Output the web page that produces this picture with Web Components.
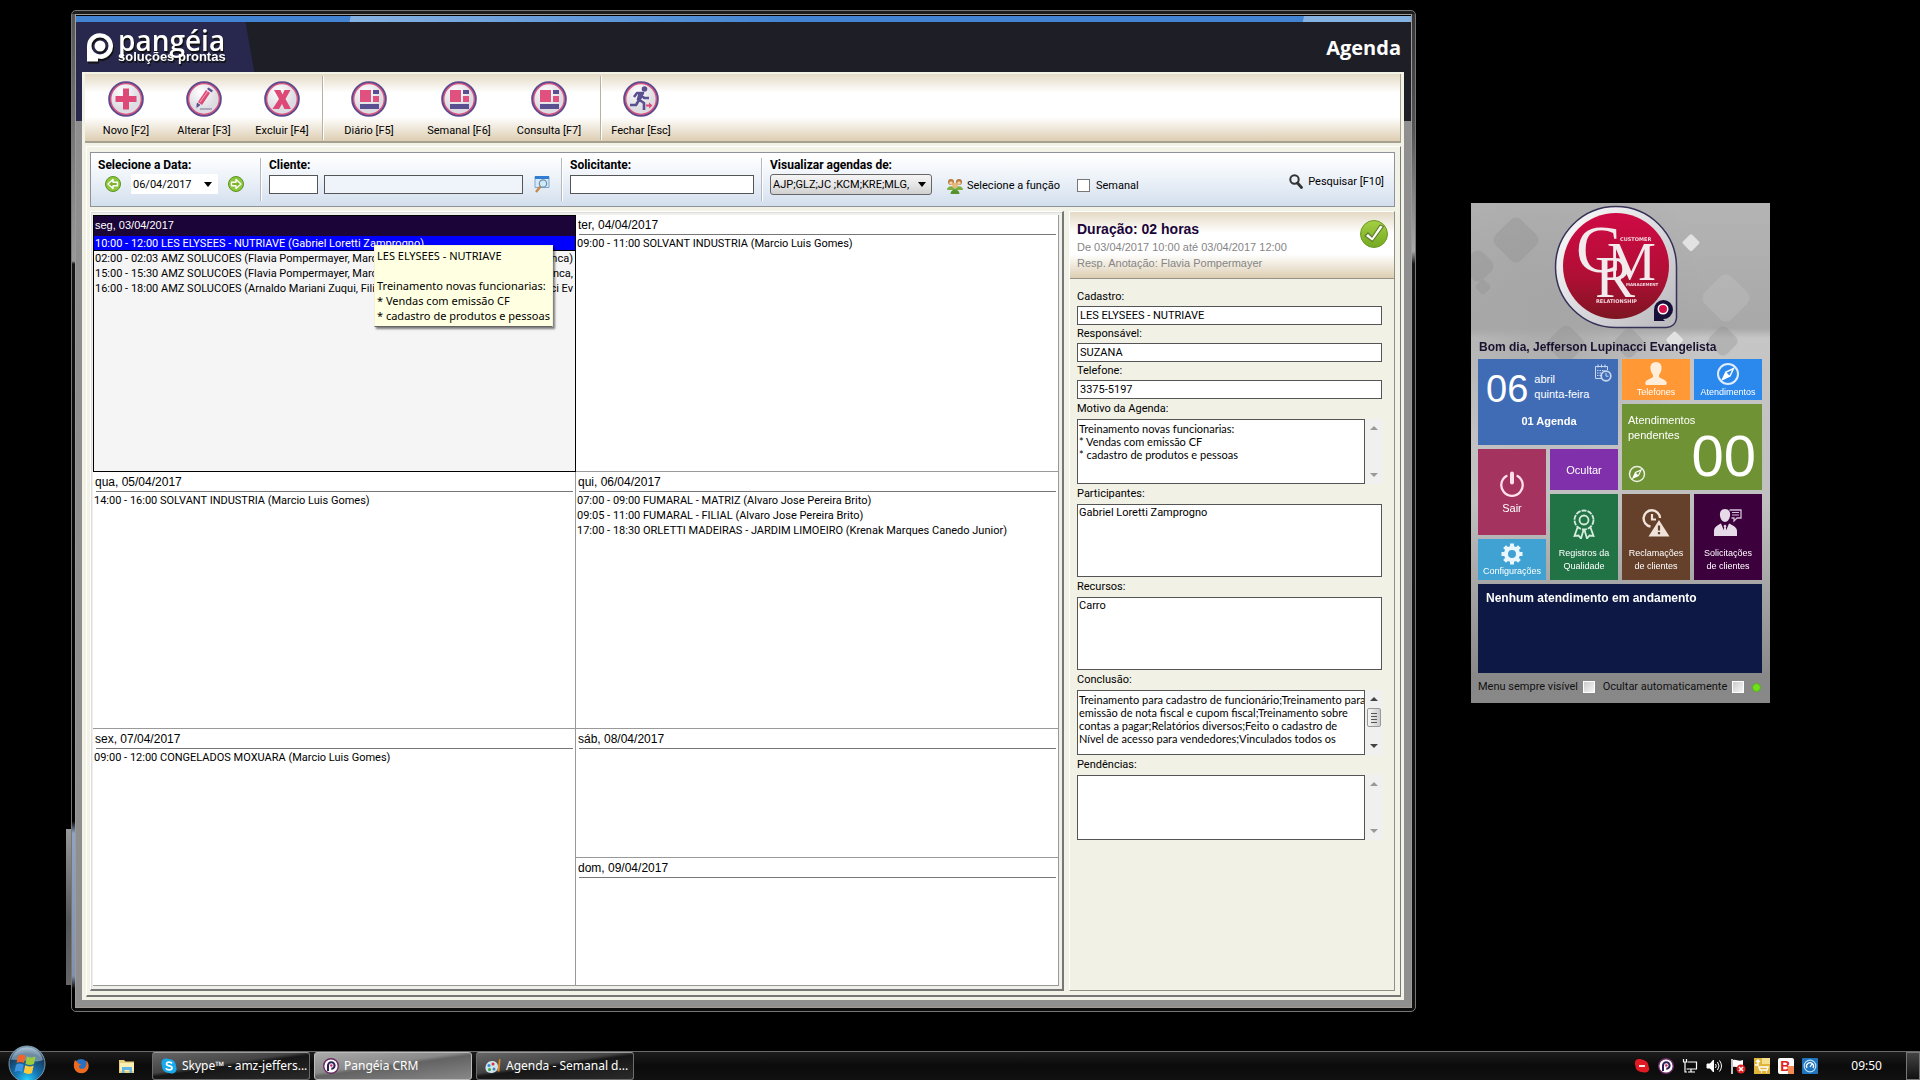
<!DOCTYPE html>
<html lang="pt-BR">
<head>
<meta charset="utf-8">
<title>Agenda</title>
<style>
html,body{margin:0;height:100%;background:#000}
body{font-family:Roboto,"Liberation Sans",sans-serif;font-size:11px;line-height:15px;color:#000;overflow:hidden}
</style>
</head>
<body>
<agenda-desktop></agenda-desktop>
<script>
const UI = '"Open Sans","Noto Sans",sans-serif';
const SANS = '"Liberation Sans",Arial,sans-serif';
const BASE = `*{box-sizing:border-box}
button,input,select,textarea{font:inherit;color:inherit;margin:0;border-radius:0}
button{background:none;border:0;padding:0;cursor:pointer}
svg{display:block;flex:none}`;

function define(name, css, html) {
  customElements.define(name, class extends HTMLElement {
    constructor() {
      super();
      const root = this.attachShadow({mode: 'open'});
      const body = typeof html === 'function' ? html(this) : html;
      root.innerHTML = `<style>${BASE}${css}</style>${body}`;
    }
  });
}

const badge = inner => `<svg width="38" height="38" viewBox="0 0 38 38">
<defs><radialGradient id="g" cx=".4" cy=".3"><stop offset="0" stop-color="#fff"/><stop offset="1" stop-color="#dcdce2"/></radialGradient></defs>
<circle cx="19" cy="19" r="16.6" fill="url(#g)" stroke="#5c4a8c" stroke-width="2.4"/><circle cx="19" cy="19" r="15.3" fill="none" stroke="#d9527f" stroke-width="1.3"/>${inner}</svg>`;
const plan = badge('<rect x="10" y="10" width="11" height="12" fill="#e0517f"/><rect x="23" y="10" width="6" height="4" fill="#5a4f90"/><rect x="23" y="16" width="6" height="6" fill="#e0517f"/><rect x="10" y="24" width="19" height="5" fill="#5a4f90"/>');
const compass = s => `<svg width="${s}" height="${s}" viewBox="0 0 24 24"><circle cx="12" cy="12" r="10" fill="none" stroke="#fff" stroke-width="2" opacity=".85"/><path d="M17.500 6.500L14 14l-7.500 3.500L10 10z" fill="none" stroke="#fff" stroke-width="1.500"/><path d="M10 10l4 4-7.500 3.500z" fill="#fff"/></svg>`;
const arrow = d => `<svg width="18" height="18" viewBox="0 0 18 18"><circle cx="9" cy="9" r="7.500" fill="#8cc63a" stroke="#5b9320"/><path d="${d}" fill="#7fb52c" stroke="#fff" stroke-width="1.400" stroke-linejoin="round"/></svg>`;
const pmark = (s, c) => `<svg width="${s - 3}" height="${s}" viewBox="1 0 27 30"><path fill="${c}" fill-rule="evenodd" d="M2 29.500V14A13 13 0 1 1 17 27L13 26.500v3zM15 5.500a8.500 8.500 0 1 0 0 17 8.500 8.500 0 0 0 0-17z"/><circle cx="15" cy="14" r="5.500" fill="${c}"/></svg>`;

const ICON = {
  novo: badge('<path d="M16 8.500h6v7.500h7.500v6H22v7.500h-6V22H8.500v-6H16z" fill="#dd4a77"/>'),
  alterar: badge('<path d="M13 22L21 10l4 3-8 12z" fill="#dd4a77"/><path d="M15 22l8-11" stroke="#f3b1c6"/><path d="M22 9l1.500-1.500 4.500 3L26.500 12.500zM11.500 25l.5-2.500 3.500 2.500-4 3z" fill="#5a4f90"/><path d="M15 29h12" stroke="#9b97b4" stroke-width="1.500"/>'),
  excluir: badge('<path d="M11 10h6.500l2 4.500 2-4.500h6l-5 9 5.500 10h-6.500l-2.500-5-3 5h-6.500l6.500-10z" fill="#dd4a77"/>'),
  diario: plan, semanal: plan, consulta: plan,
  fechar: badge('<circle cx="22.500" cy="9" r="2.800" fill="#5a4f90"/><path d="M12 17l3-4 6 0-3.500 7 4.500 3v7M18 13l4 5 5 0M17 20l-3 5H8" fill="none" stroke="#5a4f90" stroke-width="2.600" stroke-linejoin="round"/><path d="M16.500 13h5l-3 7h-4z" fill="#5a4f90"/><path d="M24 24.500h3V22.500l3.500 3-3.500 3V26.500h-3z" fill="#dd4a77"/>'),
  prev: arrow('M4 9l5-4.500v2.700h4.500v3.600H9v2.700z'),
  next: arrow('M14 9L9 4.500v2.700H4.500v3.600H9v2.700z'),
  find: '<svg width="16" height="18" viewBox="0 0 16 18"><path d="M1 1.500h14v11H1z" fill="#d9e8f6" stroke="#7ba7d4"/><path d="M1 1h14v3H1z" fill="#2f7cd0"/><circle cx="9" cy="8.500" r="3.700" fill="#cdeaf8" stroke="#6f8ea9" stroke-width="1.200"/><path d="M6.500 11.500L2 17" stroke="#c48a4a" stroke-width="2.400"/></svg>',
  group: '<svg width="16" height="16" viewBox="0 0 16 16"><circle cx="4" cy="4" r="3" fill="#b9773b"/><circle cx="12" cy="4" r="3" fill="#b9773b"/><circle cx="4" cy="5" r="1.800" fill="#f3cfa0"/><circle cx="12" cy="5" r="1.800" fill="#f3cfa0"/><path d="M0 12c0-5 8-5 8 0zM8 12c0-5 8-5 8 0z" fill="#7cb043"/><circle cx="8" cy="7.500" r="2.800" fill="#e8b77e"/><path d="M3.500 16c0-6 9-6 9 0z" fill="#57932c"/></svg>',
  lens: '<svg width="14" height="15" viewBox="0 0 14 15"><circle cx="5.500" cy="5.500" r="4.200" fill="none" stroke="#333" stroke-width="2"/><path d="M8.500 9l4 4.500" stroke="#333" stroke-width="2.800" stroke-linecap="round"/></svg>',
  check: '<svg width="30" height="30" viewBox="0 0 30 30"><defs><linearGradient id="k" x2="0" y2="1"><stop offset="0" stop-color="#a4cf44"/><stop offset="1" stop-color="#74a91f"/></linearGradient></defs><circle cx="15" cy="15" r="13.500" fill="url(#k)" stroke="#6d9a26"/><path d="M6 17l3-3 4 4 8-12 3.500 1.500L13.500 22.500z" fill="#fff" stroke="#607d2c" stroke-width="1.200" stroke-linejoin="round"/></svg>',
  calendar: '<svg width="18" height="18" viewBox="0 0 18 18" fill="none" stroke="#c9d8f0"><path d="M8 14.500H1.500v-12h12V6M4 .5v3M7.500.5v3M11 .5v3"/><path d="M3 6.500h8M3 9h4M3 11.500h4" stroke-dasharray="1.500 1"/><circle cx="12" cy="12" r="4.800" stroke-width="1.700"/><path d="M12 9v3.200h2.500"/></svg>',
  person: '<svg width="22" height="24" viewBox="0 0 22 24" fill="#ffeeda"><path d="M11 0c4 0 6 3 5.500 7-.3 3-1.500 4.500-2.500 6v2c1 1.500 6 2 7.500 5 .5 1.500 0 3-1 3H1.500c-1 0-1.500-1.500-1-3 1.500-3 6.500-3.500 7.500-5v-2C7 11.500 5.800 10 5.500 7 5 3 7 0 11 0z"/></svg>',
  compass: compass(24), compassSmall: compass(18),
  power: '<svg width="26" height="26" viewBox="0 0 26 26" fill="none" stroke="#ffe0ea" stroke-linecap="round"><path d="M7.500 5a10.700 10.700 0 1 0 11 0" stroke-width="2.300"/><path d="M13 2.500v9" stroke-width="4"/></svg>',
  gear: '<svg width="22" height="22" viewBox="-11 -11 22 22"><circle r="6" fill="none" stroke="#eaf7ff" stroke-width="4"/><path d="M0-10.500V-7M0 7v3.500M-10.500 0H-7M7 0h3.500M-7.400-7.400L-5-5M5 5l2.400 2.400M-7.400 7.400L-5 5M5-5l2.400-2.400" stroke="#eaf7ff" stroke-width="4"/></svg>',
  medal: '<svg width="24" height="30" viewBox="0 0 24 30" fill="none" stroke="#d5ecdd" stroke-width="1.800"><circle cx="12" cy="11" r="9.500" stroke-dasharray="5 1"/><circle cx="12" cy="11" r="4.500"/><path d="M5.500 18.500L2.500 27l4-.5 2.500 3 2.500-8.500M18.500 18.500l3 8.500-4-.5-2.500 3-2.500-8.500"/></svg>',
  warn: '<svg width="28" height="28" viewBox="0 0 28 28"><path d="M8.500 17.500A8.200 8.200 0 1 1 18 9" fill="none" stroke="#efe3da" stroke-width="2.400"/><path d="M10 5v5.500h4" fill="none" stroke="#efe3da" stroke-width="2.200"/><path d="M17 11l10.500 16.500H6.500z" fill="#efe3da"/><path d="M17 16.500v5M17 23v2.200" stroke="#65402a" stroke-width="2.200"/></svg>',
  client: '<svg width="28" height="28" viewBox="0 0 28 28"><path d="M11 0c4 0 5.500 3 5 7-.5 3-2.500 6-5 6s-4.500-3-5-6c-.5-4 1-7 5-7z" fill="#e6d9e8"/><path d="M0 27v-5c0-4 4-6 7-7.500L11 24l4-9.500c3 1.500 8 3.500 8 7.500v5z" fill="#e6d9e8"/><path d="M11 15.500l1.600 1.600-.8 1.200.8 4.700-1.600 2-1.600-2 .8-4.700-.8-1.200z" fill="#e6d9e8"/><path d="M15.500 1H27v8h-4l-3 3V9h-2.500" fill="none" stroke="#d3bfd8" stroke-width="1.300"/><path d="M18 3.500h7M18 6h7" stroke="#d3bfd8"/></svg>',
  orb: '<svg width="38" height="38" viewBox="0 0 38 38"><defs><radialGradient id="o" cx=".5" cy=".95" r=".9"><stop offset="0" stop-color="#27d2ff"/><stop offset=".35" stop-color="#1679b8"/><stop offset=".8" stop-color="#173a5c"/><stop offset="1" stop-color="#7f9fb8"/></radialGradient></defs><circle cx="19" cy="19" r="18" fill="url(#o)" stroke="#7c98aa"/><path d="M3 15a16.500 16.500 0 0 1 32 0c-9 4-22-1-32 0z" fill="#d8ecf6" opacity=".45"/><path d="M10 11c3-2 5-1.500 7.500 0L16 18c-3-1.500-5-1.500-7.500 0z" fill="#f0642a"/><path d="M19 11.500c3 1.500 5 1.500 8.500 0L26 19c-3 1.500-5.500 1.500-8.500-.3z" fill="#9ccc3c"/><path d="M8 19.800c3-1.800 5-1.500 7.700 0L14 27c-2.500-1.500-5-1.500-7.500 0z" fill="#3f94e0"/><path d="M17.200 20.300c3 1.500 5.300 1.500 8.500.2L24 28c-3 1.500-5.500 1-8.300-.5z" fill="#fbc93a"/></svg>',
  firefox: '<svg width="16" height="16" viewBox="0 0 16 16"><circle cx="8" cy="8" r="7" fill="#2b6fc0"/><path d="M2 2c-2 4-1.500 9 1.500 11.500S12 16 14.500 12s.5-8.500-1.500-9.500c1 3 .5 6-1.500 7.500s-5 1-5.500-1 1-2 2.500-2C7 5.500 5 6 4.500 4.500z" fill="#ef6a1b"/></svg>',
  folder: '<svg width="18" height="16" viewBox="0 0 18 16"><path d="M1 2h5l1.500 1.500H16V15H1z" fill="#e9cf7c"/><path d="M2 5h14v8H2z" fill="#fbefb6"/><path d="M4 15V9h10v6h-2.500v-3h-5v3z" fill="#62b5e4"/></svg>',
  skype: '<svg width="16" height="16" viewBox="0 0 16 16"><path d="M4.500.5c2 0 2.500.5 3.500.5 4 0 7 3 7 7 0 .8.800 1.500.5 3.500-.5 3-3 4-4.500 4S9 15 8 15c-4 0-7-3-7-7 0-1-.7-2-.5-3.500C1 2 2.500.5 4.500.5z" fill="#16a9ec"/><path d="M11 5.500C10 3.500 5.500 3.500 5.500 6c0 2.500 5.500 1.200 5.500 3.800 0 2.700-5 2.700-6 .4" fill="none" stroke="#fff" stroke-width="1.700"/></svg>',
  pangeia: '<svg width="16" height="16" viewBox="0 0 16 16"><circle cx="8" cy="8" r="7.300" fill="#fff" stroke="#6b2a63" stroke-width="1.400"/><path d="M5 13V7.500a3.300 3.300 0 1 1 3.300 3.300" fill="none" stroke="#2b1d55" stroke-width="2"/><circle cx="8.300" cy="7.500" r="1.300" fill="#d32b60"/></svg>',
  paint: '<svg width="16" height="16" viewBox="0 0 16 16"><path d="M7 3c4 0 6 2.500 6 6s-3 6-7 6-6-3-5.500-6S3 3 7 3z" fill="#cfe3ee"/><circle cx="4" cy="7.500" r="1.500" fill="#2f8fd0"/><circle cx="8" cy="6" r="1.500" fill="#d33"/><circle cx="4.500" cy="11.500" r="1.500" fill="#3a3"/><circle cx="9" cy="11" r="1.500" fill="#4a7fb0"/><path d="M14 1l1.500.5-1 12h-2z" fill="#e28a25"/></svg>',
  tSkype: '<svg width="16" height="16" viewBox="0 0 16 16"><path d="M4.500 1C9 1 14.500 3 14.500 8c0 1 1 1.500.7 3.500-.5 2-2 3-4 3S1 14 1.500 8C.3 5 1 1 4.500 1z" fill="#e01b24"/><path d="M5 8h6" stroke="#fff" stroke-width="1.800"/></svg>',
  tNet: '<svg width="16" height="16" viewBox="0 0 16 16" fill="none" stroke="#fff" stroke-width="1.200"><path d="M5.500 4h9v7h-10M9 11v2.500M6 14h7M3 6v8h2M1.500 1v3h3V1M3 4v3"/></svg>',
  tVol: '<svg width="16" height="16" viewBox="0 0 16 16" fill="none" stroke="#fff"><path d="M1 6h3l3.500-4v12L4 10H1z" fill="#fff"/><path d="M9.500 6q1.500 2 0 4M11.500 4q3 4 0 8M13.500 2.500q4 5.500 0 11"/></svg>',
  tFlag: '<svg width="16" height="16" viewBox="0 0 16 16"><path d="M2 1v15" stroke="#fff" stroke-width="1.500"/><path d="M3 2c4-1 5 2 10 0v7c-5 2-6-1-10 0z" fill="#fff"/><circle cx="11" cy="11" r="4.500" fill="#d22"/><path d="M9 9l4 4M13 9l-4 4" stroke="#fff" stroke-width="1.500"/></svg>',
  tCart: '<svg width="16" height="16" viewBox="0 0 16 16"><path d="M0 0h16v16H0z" fill="#e0b63a"/><path d="M8 0h8v6H8z" fill="#f5e08e"/><path d="M1 7h3V3M2 4l2-2 2 2M5 9h9l-1 3H6zM7 14h1M12 14h1" fill="none" stroke="#fff" stroke-width="1.500"/></svg>',
  tBlue: '<svg width="16" height="16" viewBox="0 0 16 16"><rect width="16" height="16" rx="1" fill="#1f74bd"/><circle cx="8" cy="8" r="5.800" fill="none" stroke="#bfe0f7" stroke-width="1.200"/><path d="M5 10a3.500 3.500 0 1 1 6 0M8 9l2-3" fill="none" stroke="#fff" stroke-width="1.300"/></svg>'
};

define('app-icon', ':host{display:block;flex:none}', el => ICON[el.getAttribute('name')] || '');

/* ---------- toolbar ---------- */
define('tool-button', `
:host{display:block;width:var(--w,78px)}
button{width:100%;display:flex;flex-direction:column;align-items:center;gap:5px;white-space:nowrap}`,
el => `<button type="button"><app-icon name="${el.getAttribute('icon')}"></app-icon><slot></slot></button>`);

define('tool-bar', `
:host{display:flex;height:69px;padding:6px 2px 1px;border:1px solid #a5a090;border-width:0 1px 2px 0;
background:linear-gradient(#e4dac5,#fff 28%,#fff 64%,#ddceb2)}
i{width:2px;margin:-4px 0 0 1px;background:linear-gradient(90deg,#b5b1a5 50%,#fff 50%)}
.wide{--w:90px;display:flex;padding-right:5px}`,
`<tool-button icon="novo">Novo [F2]</tool-button><tool-button icon="alterar">Alterar [F3]</tool-button><tool-button icon="excluir">Excluir [F4]</tool-button><i></i>
<div class="wide"><tool-button icon="diario">Diário [F5]</tool-button><tool-button icon="semanal">Semanal [F6]</tool-button><tool-button icon="consulta">Consulta [F7]</tool-button></div><i></i>
<tool-button icon="fechar">Fechar [Esc]</tool-button>`);

/* ---------- filters ---------- */
define('filter-bar', `
:host{display:flex;height:55px;padding:5px 10px 5px 7px;border:1px solid #8f9298;background:linear-gradient(#fff 5%,#eef3f9 45%,#d3dfee)}
section{display:flex;flex-direction:column;gap:1px}
section>label{font-weight:bold;font-size:12px;line-height:15px}
.row{display:flex;align-items:center;height:20px}
i{width:2px;margin-right:7px;background:linear-gradient(90deg,#b4b8bd 50%,#fff 50%)}
input[type=text]{height:19px;border:1px solid #555;background:#fff;padding:0 3px}
select{appearance:none;outline:0}
.s{position:relative;display:flex}
.s::after{content:"";position:absolute;right:6px;top:8px;border:4px solid transparent;border-top:5px solid #000;border-bottom:0}
.date select{width:87px;height:20px;border:0;background:#fff;padding:0 2px}
.who select{width:162px;height:21px;border:1px solid #666;border-radius:3px;background:linear-gradient(#f5f5f5,#e6e6e6 50%,#d0d0d0);padding:0 14px 0 2px}
.a{width:162px}.b{width:292px}.c{width:191px}
.date{padding-left:6px;gap:9px}
.opts{display:flex;align-items:center;padding-top:12px;gap:4px;margin-left:15px}
.opts button{display:flex;align-items:center;gap:4px}
.opts label{display:flex;align-items:center;gap:6px}
input[type=checkbox]{appearance:none;width:13px;height:13px;border:1px solid #777;background:#fff;margin-left:13px}
.code{width:49px;margin-right:6px}.name{width:199px;margin-right:11px}
.name[type=text]{background:#eff4fa}.req{width:184px}
.find{margin-left:auto;display:flex;align-items:center;gap:5px;align-self:flex-start;margin-top:14px;height:18px}`,
`<section class="a"><label for="dt">Selecione a Data:</label><div class="row date"><button type="button" aria-label="Anterior"><app-icon name="prev"></app-icon></button><span class="s"><select id="dt"><option>06/04/2017</option></select></span><button type="button" aria-label="Próximo"><app-icon name="next"></app-icon></button></div></section><i></i>
<section class="b"><label for="cli">Cliente:</label><div class="row"><input id="cli" type="text" class="code"><input type="text" aria-label="Nome do cliente" readonly class="name"><button type="button" aria-label="Localizar"><app-icon name="find"></app-icon></button></div></section><i></i>
<section class="c"><label for="sol">Solicitante:</label><div class="row"><input id="sol" type="text" class="req"></div></section><i></i>
<section><label for="who">Visualizar agendas de:</label><div class="row who"><span class="s"><select id="who"><option>AJP;GLZ;JC ;KCM;KRE;MLG,</option></select></span></div></section>
<div class="opts"><button type="button"><app-icon name="group"></app-icon>Selecione a função</button><label><input type="checkbox">Semanal</label></div>
<button type="button" class="find"><app-icon name="lens"></app-icon>Pesquisar [F10]</button>`);

/* ---------- calendar ---------- */
define('day-cell', `
:host{display:flex;flex-direction:column;min-height:0;min-width:0;overflow:hidden;border-right:1px solid #999;border-bottom:1px solid #999;background:#fff}
h3{margin:0 2px 1px 3px;font:12px/20px ${SANS};height:20px;border-bottom:1px solid #777;text-indent:-1px;flex:none}
:host([selected]){background:#f5f5f5;border:1px solid #000}
:host([selected]) h3{margin:0;padding-left:2px;background:#1a0438;color:#fff;border:0;font-size:11px;line-height:19px}
::slotted(div){padding:0 2px 0 1px;height:15px;line-height:15px;white-space:nowrap;overflow:hidden;display:flex;justify-content:space-between;flex:none}
::slotted(.on){background:#00f;color:#fff;border-bottom:1px solid #000}`,
el => `<h3>${el.getAttribute('day')}</h3><slot></slot>`);

define('event-tip', `
:host{position:absolute;z-index:2;left:283px;top:33px;padding:2px 2px 3px;background:#ffffe1;border:1px solid #f4f4d4;border-bottom-color:#666;
box-shadow:2px 2px 2px rgba(0,0,0,.5);font:11px/15px "Noto Sans",sans-serif;white-space:pre}`, '<slot></slot>');

define('week-calendar', `
:host{position:relative;display:grid;grid-template-columns:1fr 1fr;min-width:0;min-height:0;flex:1;
border:1px solid;border-color:#fff #777 #777 #fff;border-right-width:2px;border-bottom-width:2px;padding:3px 3px 3px 2px;background:#f0f0ea;box-shadow:inset 1px 1px #ddd}
.col{display:grid;grid-template-rows:repeat(6,1fr);min-height:0;min-width:0}
.col>*{grid-row:span 2}.col>.half{grid-row:span 1}`,
`<div class="col">
<day-cell selected day="seg, 03/04/2017"><div class="on">10:00 - 12:00 LES ELYSEES - NUTRIAVE (Gabriel Loretti Zamprogno)</div><div><span>02:00 - 02:03 AMZ SOLUCOES (Flavia Pompermayer, Marc</span><span>nca)</span></div><div><span>15:00 - 15:30 AMZ SOLUCOES (Flavia Pompermayer, Marc</span><span>nca,</span></div><div><span>16:00 - 18:00 AMZ SOLUCOES (Arnaldo Mariani Zuqui, Filip</span><span>ci Ev</span></div></day-cell>
<day-cell day="qua, 05/04/2017"><div>14:00 - 16:00 SOLVANT INDUSTRIA (Marcio Luis Gomes)</div></day-cell>
<day-cell day="sex, 07/04/2017"><div>09:00 - 12:00 CONGELADOS MOXUARA (Marcio Luis Gomes)</div></day-cell></div>
<div class="col">
<day-cell day="ter, 04/04/2017"><div>09:00 - 11:00 SOLVANT INDUSTRIA (Marcio Luis Gomes)</div></day-cell>
<day-cell day="qui, 06/04/2017"><div>07:00 - 09:00 FUMARAL - MATRIZ (Alvaro Jose Pereira Brito)</div><div>09:05 - 11:00 FUMARAL - FILIAL (Alvaro Jose Pereira Brito)</div><div>17:00 - 18:30 ORLETTI MADEIRAS - JARDIM LIMOEIRO (Krenak Marques Canedo Junior)</div></day-cell>
<day-cell class="half" day="sáb, 08/04/2017"></day-cell>
<day-cell class="half" day="dom, 09/04/2017"></day-cell></div>
<event-tip>LES ELYSEES - NUTRIAVE

Treinamento novas funcionarias:
* Vendas com emissão CF
* cadastro de produtos e pessoas</event-tip>`);

/* ---------- details ---------- */
define('scroll-rail', `
:host{display:flex;flex-direction:column;justify-content:space-between;align-items:center;width:16px;background:#f0f0f0;padding:7px 0;position:relative}
b{border:4px solid transparent;border-width:0 4px 4px;border-bottom-color:#999}
b:last-child{border-width:4px 4px 0;border-top-color:#999}
:host([thumb]) b{border-bottom-color:#444;border-top-color:#444}
u{display:none}
:host([thumb]) u{display:block;position:absolute;left:1px;top:18px;width:14px;height:19px;border:1px solid #999;border-radius:2px;background:repeating-linear-gradient(#555 0 1px,transparent 1px 3px) center/6px 10px no-repeat,linear-gradient(90deg,#f6f6f6,#ccc)}`,
'<b></b><u></u><b></b>');

define('field-box', `
:host{display:flex;flex-direction:column}
label{height:18px;line-height:18px}
:host([kind]) label{height:20px;line-height:20px}
input{height:19px;width:100%;border:1px solid #555;background:#fff;padding:0 2px 1px}
.box{display:flex;gap:1px}
textarea{display:block;flex:1;min-width:0;height:65px;border:1px solid #555;background:#fff;resize:none;overflow:hidden;padding:2px 1px;line-height:13px;outline:0;white-space:pre}
:host([kind=memo]) textarea{font-family:Lato,Roboto,sans-serif}
:host([kind=list]) textarea{height:73px;padding-top:1px}`,
el => {
  const k = el.getAttribute('kind'), v = el.getAttribute('value') || '';
  return `<label for="f">${el.getAttribute('label')}</label>` + (!k ? `<input id="f" value="${v}">` :
    `<div class="box"><textarea id="f" readonly>${v}</textarea>${k === 'memo' ? `<scroll-rail${el.hasAttribute('thumb') ? ' thumb' : ''}></scroll-rail>` : ''}</div>`);
});

define('detail-panel', `
:host{display:block;width:326px;flex:none;border:1px solid;border-color:#fff #8f8f86 #8f8f86 #fff;background:#f1f1e6}
header{display:flex;justify-content:space-between;height:67px;padding:8px 5px 0 7px;color:#858585;font-family:${SANS};
border-bottom:1px solid #96938a;background:linear-gradient(#e4dac5,#fff 32%,#fff 64%,#ddceb2)}
h2{margin:0;font-size:14px;line-height:19px;color:#1a0438}
p{margin:0;line-height:16px}
app-icon{margin-top:-1px}
.f{padding:9px 12px 0 7px}`,
`<header><div><h2>Duração: 02 horas</h2><p>De 03/04/2017 10:00 até 03/04/2017 12:00</p><p>Resp. Anotação: Flavia Pompermayer</p></div><app-icon name="check"></app-icon></header>
<div class="f"><field-box label="Cadastro:" value="LES ELYSEES - NUTRIAVE"></field-box>
<field-box label="Responsável:" value="SUZANA"></field-box>
<field-box label="Telefone:" value="3375-5197"></field-box>
<field-box kind="memo" label="Motivo da Agenda:" value="Treinamento novas funcionarias:&#10;* Vendas com emissão CF&#10;* cadastro de produtos e pessoas"></field-box>
<field-box kind="list" label="Participantes:" value="Gabriel Loretti Zamprogno"></field-box>
<field-box kind="list" label="Recursos:" value="Carro"></field-box>
<field-box kind="memo" thumb label="Conclusão:" value="Treinamento para cadastro de funcionário;Treinamento para&#10;emissão de nota fiscal e cupom fiscal;Treinamento sobre&#10;contas a pagar;Relatórios diversos;Feito o cadastro de&#10;Nível de acesso para vendedores;Vinculados todos os"></field-box>
<field-box kind="memo" label="Pendências:"></field-box></div>`);

/* ---------- main window ---------- */
define('agenda-window', `
:host{display:flex;flex:1;min-width:0;position:relative}
.edge{position:absolute;left:-5px;top:819px;width:5px;height:156px;background:linear-gradient(#999,#555 60%,#666)}
.frame{flex:1;min-width:0;display:flex;border:1px solid #777;border-radius:5px;padding:3px;
background:linear-gradient(#1c1c1c,#1c1c1c) 0 0/100% 3px no-repeat,
linear-gradient(#555,#999 250px,#151515 253px,#000 810px,#8ea3c8 822px,#7f92b4 965px,#000 978px) 0 0/3px 100% no-repeat,
linear-gradient(#333,#555 120px,#aaa 240px,#151515 253px,#111) 100% 0/3px 100% no-repeat,#0c0c0c}
.in{flex:1;min-width:0;display:flex;flex-direction:column;border:1px solid #a09c94;padding-top:1px;background:#000}
.stripe{height:6px;background:linear-gradient(100deg,#4384d2 270px,#86b2e2 271px,#4384d2 700px,#4384d2 calc(100% - 107px),#86b2e2 calc(100% - 106px))}
.head{height:50px;display:flex;justify-content:space-between;align-items:center;padding:0 10px;color:#fff;
background:linear-gradient(80deg,#28284e 175px,#1d1e26 176px)}
.logo{display:flex;gap:5px;align-items:center;filter:drop-shadow(1px 2px 0 #111)}
.name{font:600 28px/20px ${UI}}
.sub{font:bold 13px/14px ${SANS};white-space:nowrap}
h1{margin:2px 0 0;font:bold 20px/28px ${UI}}
.body{flex:1;min-height:0;display:flex;padding:0 7px 7px 6px;
background:linear-gradient(90deg,#28284e 50%,#1d1e26 50%) 0 0/100% 49px no-repeat,#8f8f8f}
.client{flex:1;min-width:0;display:flex;flex-direction:column;gap:3px;background:#f2f2e7;padding:2px 3px 3px}
.panel{flex:1;min-height:0;display:flex;flex-direction:column;gap:4px;margin:0 0 0 1px;padding:5px 5px 4px 3px;border:1px solid;border-color:#fff #777 #777 #fff;border-bottom-width:2px}
.split{flex:1;min-height:0;display:flex;gap:5px}`,
`<div class="edge"></div><div class="frame"><div class="in"><div class="stripe"></div>
<div class="head"><div class="logo">${pmark(30, '#fff')}<div><div class="name">pangéia</div><div class="sub">soluções prontas</div></div></div><h1>Agenda</h1></div>
<div class="body"><div class="client"><tool-bar></tool-bar><div class="panel"><filter-bar></filter-bar><div class="split"><week-calendar></week-calendar><detail-panel></detail-panel></div></div></div></div></div></div>`);

/* ---------- CRM menu ---------- */
define('crm-tile', `
:host{display:flex;min-width:0}
button{flex:1;min-width:0;display:flex;flex-direction:column;align-items:center;justify-content:center;gap:var(--gap,0px);padding-top:var(--pt,1px);background:var(--c);color:#fff;line-height:13px;font-size:var(--fs,9px)}`,
'<button type="button"><slot></slot></button>');

define('crm-menu', `
:host{display:flex;flex-direction:column;width:299px;height:500px;flex:none;color:#fff;font-family:${SANS};
background:radial-gradient(circle at 25% 20%,#a6a6a6,transparent 35%),linear-gradient(#b4b4b4,#a8a8a8 25%,#c6c6c6 27%,#c0c0c0 60%,#888 95%)}
.art{height:133px}
.art svg{width:100%}
h2{margin:0;padding-left:8px;font-size:12px;line-height:23px;height:23px;color:#1b1230;position:relative}
.grid{display:grid;grid-template-columns:repeat(4,1fr);grid-template-rows:repeat(5,41px) 89px;gap:4px;margin:0 8px 0 7px;position:relative}
.date{grid-area:1/1/3/3}.tel{grid-area:1/3}.ate{grid-area:1/4}.pen{grid-area:2/3/4/5}.sair{grid-area:3/1/5/2}.ocu{grid-area:3/2}
.reg{grid-area:4/2/6/3}.rec{grid-area:4/3/6/4}.sol{grid-area:4/4/6/5}.cfg{grid-area:5/1}.now{grid-area:6/1/7/5}
.date{background:#406cb6;padding:5px 6px 0 8px;display:grid;grid-template-columns:auto 1fr auto;column-gap:6px;grid-template-rows:47px 20px;align-items:start}
.big{font-size:38px;line-height:50px}.d2{font-size:11px;line-height:15px;padding-top:8px;white-space:nowrap;min-width:0}
.date app-icon{margin-left:-10px}
.date b{grid-column:1/4;text-align:center;line-height:20px}
.pen{background:#6f9334;padding:9px 6px 0;display:flex;justify-content:space-between;line-height:15px}
.pen .l{display:flex;flex-direction:column;justify-content:space-between;padding-bottom:7px}
.pen .n{font-size:58px;line-height:86px;margin:0 0 0 -40px}
.now{background:#0d1844;padding:7px 8px;font-weight:bold;font-size:12px}
footer{display:flex;align-items:center;color:#111;padding:6px 9px 0 7px;justify-content:space-between;line-height:16px;font-family:Roboto,sans-serif}
label{display:flex;align-items:center;gap:5px}
input{appearance:none;width:12px;height:12px;border:1px solid #fff;background:linear-gradient(135deg,#ccc,#f6f6f6)}
.dot{width:9px;height:9px;border-radius:50%;background:#6fe01c;border:1px solid #57b01c}`,
`<div class="art"><svg height="156" viewBox="0 0 299 156" preserveAspectRatio="xMinYMin">
<defs><linearGradient id="r" x2="0" y2="1"><stop offset="0" stop-color="#cf0a45"/><stop offset=".6" stop-color="#b00f35"/><stop offset="1" stop-color="#7d1522"/></linearGradient><linearGradient id="s" x2="1" y2="1"><stop offset="0" stop-color="#fff"/><stop offset=".5" stop-color="#dcdce0"/><stop offset="1" stop-color="#b8b8bc"/></linearGradient></defs>
<g fill="#8f8f8f" opacity=".35"><rect x="27" y="19" width="36" height="36" rx="7" transform="rotate(45 45 37)"/><rect x="-6" y="50" width="26" height="26" rx="7" transform="rotate(45 7 63)"/><rect x="6" y="78" width="12" height="12" rx="3" transform="rotate(45 12 84)"/><rect x="80" y="126" width="30" height="30" rx="7" transform="rotate(45 95 141)"/><rect x="146" y="128" width="24" height="24" rx="6" transform="rotate(45 158 140)"/><rect x="240" y="126" width="24" height="24" rx="6" transform="rotate(45 252 138)"/></g>
<g fill="#c0c0c0" opacity=".4"><rect x="236" y="76" width="38" height="38" rx="8" transform="rotate(45 255 95)"/></g>
<g fill="#e2e2e2"><rect x="214" y="33" width="13" height="13" rx="2" transform="rotate(45 220 39)"/><rect x="197" y="130" width="13" height="13" rx="2" transform="rotate(45 203 137)"/></g>
<path d="M145 3.500A60.500 60.500 0 0 1 205.500 64V115Q204.500 124 195.500 124.500H145A60.500 60.500 0 0 1 145 3.500z" fill="url(#s)" stroke="#363158" stroke-width="1.500"/>
<circle cx="145" cy="63" r="53" fill="url(#r)"/>
<g font-family="Liberation Serif,serif" fill="#f2eaec"><text x="105" y="69" font-size="67">C</text><text x="136" y="77" font-size="55">M</text><text x="124" y="94" font-size="60">R</text></g>
<g font-family="DejaVu Sans,sans-serif" font-weight="bold" fill="#f2d6de"><text x="149" y="38" font-size="5">CUSTOMER</text><text x="155" y="83" font-size="4">MANAGEMENT</text><text x="125" y="100" font-size="5">RELATIONSHIP</text></g>
<path fill="#170f38" d="M183 118v-11a9.500 9.500 0 1 1 9 9l2 2z"/><circle cx="192" cy="106" r="5.500" fill="#fff"/><circle cx="192" cy="106" r="4" fill="#d6104c"/></svg></div>
<h2>Bom dia, Jefferson Lupinacci Evangelista</h2>
<div class="grid">
<div class="date"><span class="big">06</span><span class="d2">abril<br>quinta-feira</span><app-icon name="calendar"></app-icon><b>01 Agenda</b></div>
<crm-tile class="tel" style="--c:#ff9835"><app-icon name="person"></app-icon>Telefones</crm-tile>
<crm-tile class="ate" style="--c:#2b88ec"><app-icon name="compass"></app-icon>Atendimentos</crm-tile>
<div class="pen"><div class="l"><span>Atendimentos<br>pendentes</span><app-icon name="compassSmall"></app-icon></div><span class="n">00</span></div>
<crm-tile class="sair" style="--c:#a4345f;--fs:11px;--gap:5px;--pt:2px"><app-icon name="power"></app-icon>Sair</crm-tile>
<crm-tile class="ocu" style="--c:#8130ab;--fs:11px">Ocultar</crm-tile>
<crm-tile class="reg" style="--c:#217346;--gap:8px;--pt:8px"><app-icon name="medal"></app-icon><span>Registros da<br>Qualidade</span></crm-tile>
<crm-tile class="rec" style="--c:#65402a;--gap:10px;--pt:8px"><app-icon name="warn"></app-icon><span>Reclamações<br>de clientes</span></crm-tile>
<crm-tile class="sol" style="--c:#3c003c;--gap:10px;--pt:8px"><app-icon name="client"></app-icon><span>Solicitações<br>de clientes</span></crm-tile>
<crm-tile class="cfg" style="--c:#3fa2d2"><app-icon name="gear"></app-icon>Configurações</crm-tile>
<div class="now">Nenhum atendimento em andamento</div></div>
<footer><label>Menu sempre visível<input type="checkbox"></label><label>Ocultar automaticamente<input type="checkbox"></label><span class="dot"></span></footer>`);

/* ---------- taskbar ---------- */
define('task-button', `
:host{display:block;width:158px}
button{width:100%;height:28px;display:flex;align-items:center;gap:5px;padding:0 8px;border:1px solid #6d6d6d;border-top-color:#999;border-radius:3px;color:#fff;white-space:nowrap;
background:linear-gradient(172deg,#666,#444 42%,#161616 50%,#2a2a2a)}
:host([active]) button{background:linear-gradient(172deg,#aaa,#8a8a8a 42%,#636363 50%,#888);border-color:#bbb}`,
el => `<button type="button"><app-icon name="${el.getAttribute('icon')}"></app-icon><slot></slot></button>`);

define('task-bar', `
:host{display:flex;align-items:center;height:29px;border-top:1px solid #6a6a6a;background:linear-gradient(#1c1c1c,#0b0b0b 50%,#111);color:#fff;font:12px/16px "Noto Sans",sans-serif;padding-left:8px}
.orb{margin-top:-4px;width:38px;height:38px}
.ff{margin-left:27px}.fo{margin:0 16px 0 29px}
.tasks{display:flex;gap:4px}
.tray{margin-left:auto;display:flex;gap:8px;align-items:center}
.tray b{width:16px;height:16px;background:#fff;color:#d22;font:bold 14px/16px "Liberation Sans",sans-serif;border-radius:2px;position:relative;padding-left:2px}
.tray b::after{content:"";position:absolute;right:0;bottom:0;width:6px;height:8px;background:#f58a55}
time{margin:0 24px 0 33px}
.show{width:14px;height:28px;border:1px solid #777;background:linear-gradient(#444,#111)}`,
`<button type="button" class="orb" aria-label="Iniciar"><app-icon name="orb"></app-icon></button>
<button type="button" class="ff" aria-label="Firefox"><app-icon name="firefox"></app-icon></button>
<button type="button" class="fo" aria-label="Explorador"><app-icon name="folder"></app-icon></button>
<div class="tasks"><task-button icon="skype">Skype™ - amz-jeffers...</task-button><task-button icon="pangeia" active>Pangéia CRM</task-button><task-button icon="paint">Agenda - Semanal d...</task-button></div>
<div class="tray"><app-icon name="tSkype"></app-icon><app-icon name="pangeia"></app-icon><app-icon name="tNet"></app-icon><app-icon name="tVol"></app-icon><app-icon name="tFlag"></app-icon><app-icon name="tCart"></app-icon><b>B</b><app-icon name="tBlue"></app-icon></div>
<time>09:50</time><button type="button" class="show" aria-label="Mostrar área de trabalho"></button>`);

define('agenda-desktop', `
:host{display:flex;flex-direction:column;height:100vh;background:#000}
main{flex:1;min-height:0;display:flex;gap:55px;padding:10px 150px 39px 71px}
crm-menu{margin-top:193px}`,
`<main><agenda-window></agenda-window><crm-menu></crm-menu></main><task-bar></task-bar>`);
</script>
</body>
</html>
